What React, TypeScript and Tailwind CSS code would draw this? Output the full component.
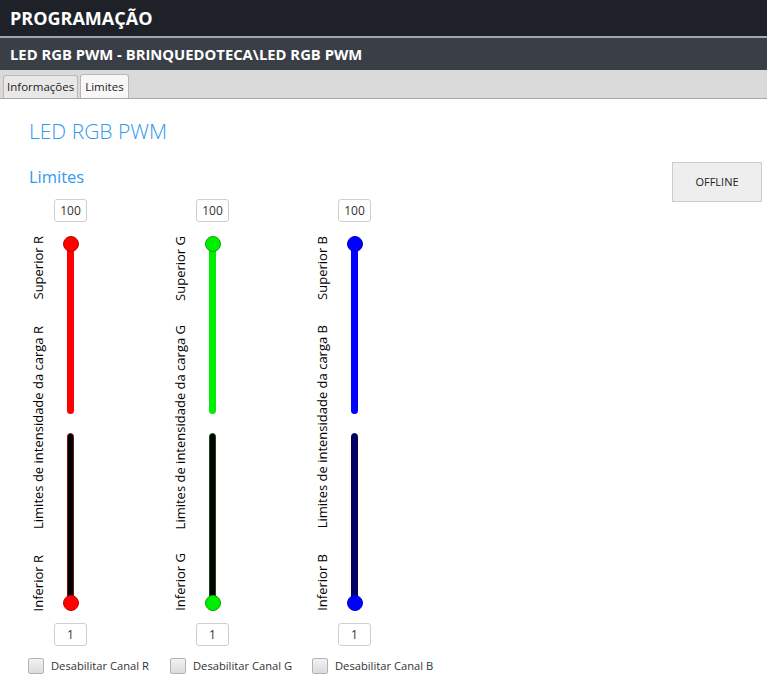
import React from "react";

type Ch = {
  key: string;
  thumb: string;
  thumbBorder: string;
  track: string;
  dark: string;
  darkBorder: string;
};

const channels: Ch[] = [
  { key: "R", thumb: "bg-[#ff0000]", thumbBorder: "border-[#c40000]", track: "bg-[#ff0000]", dark: "bg-[#000000]", darkBorder: "border-[#7a1010]" },
  { key: "G", thumb: "bg-[#00ee00]", thumbBorder: "border-[#00a800]", track: "bg-[#00ee00]", dark: "bg-[#000000]", darkBorder: "border-[#0f4a0f]" },
  { key: "B", thumb: "bg-[#0000ff]", thumbBorder: "border-[#0000c8]", track: "bg-[#0000ff]", dark: "bg-[#000066]", darkBorder: "border-[#000055]" },
];

function VLabel({ children }: { children: React.ReactNode }) {
  return (
    <span className="[writing-mode:vertical-rl] rotate-180 text-[13px] leading-[20px] text-black whitespace-nowrap">
      {children}
    </span>
  );
}

function ValueBox({ value }: { value: string }) {
  return (
    <div className="ml-[26px] w-[33px] h-[23px] border border-[#cfcfcf] rounded-[3px] bg-white flex items-center justify-center text-[12px] text-[#333]">
      {value}
    </div>
  );
}

function Channel({ c }: { c: Ch }) {
  return (
    <div className="w-[142px] flex flex-col">
      <ValueBox value="100" />
      <div className="mt-[14px] flex flex-row h-[375px]">
        <div className="w-[20px] flex flex-col justify-between items-center">
          <VLabel>Superior {c.key}</VLabel>
          <VLabel>Limites de intensidade da carga {c.key}</VLabel>
          <VLabel>Inferior {c.key}</VLabel>
        </div>
        <div className="ml-[14px] w-[17px] flex flex-col items-center">
          <div className={`relative z-10 w-[16px] h-[16px] rounded-full border ${c.thumb} ${c.thumbBorder} -mb-[8px] shrink-0`} />
          <div className={`w-[7px] h-[170px] rounded-full ${c.track} shrink-0`} />
          <div className={`mt-[19px] w-[7px] h-[170px] rounded-full border ${c.dark} ${c.darkBorder} shrink-0`} />
          <div className={`relative z-10 w-[16px] h-[16px] rounded-full border ${c.thumb} ${c.thumbBorder} -mt-[8px] shrink-0`} />
        </div>
      </div>
      <div className="mt-[12px]">
        <ValueBox value="1" />
      </div>
      <div className="mt-[12px] flex items-center">
        <div className="w-[16px] h-[16px] rounded-[2px] border border-[#b4b4b4] bg-gradient-to-b from-[#f2f2f2] to-[#dcdcdc]" />
        <span className="ml-[7px] text-[11.2px] text-[#333] whitespace-nowrap">Desabilitar Canal {c.key}</span>
      </div>
    </div>
  );
}

export default function App() {
  return (
    <div className="w-[767px] h-[679px] bg-white overflow-hidden font-['Open_Sans',sans-serif]">
      <div className="h-[36px] bg-[#1e2228] flex items-center px-[10px] text-white font-bold text-[18px]">
        PROGRAMAÇÃO
      </div>
      <div className="h-[2px] bg-[#a3a7ab]" />
      <div className="h-[32px] bg-[#3a3f47] flex items-center px-[10px] text-white font-bold text-[14.8px]">
        LED RGB PWM - BRINQUEDOTECA\LED RGB PWM
      </div>
      <div className="h-[29px] bg-[#dadada] border-b border-[#a8a8a8] flex items-end pl-[3px] gap-[2px]">
        <div className="h-[23px] px-[3px] bg-[#e8e8e8] border border-b-0 border-[#b8b8b8] rounded-t-[3px] flex items-center text-[11.5px] text-[#222]">
          Informações
        </div>
        <div className="h-[24px] px-[4px] bg-[#f7f7f7] border border-b-0 border-[#b8b8b8] rounded-t-[3px] flex items-center text-[11.5px] text-[#222]">
          Limites
        </div>
      </div>
      <div className="flex flex-row">
        <div className="pl-[28px] flex flex-col">
          <div className="pt-[18px] pl-[1px] text-[21px] leading-[29px] font-light text-[#3399ee]">LED RGB PWM</div>
          <div className="pt-[20px] pl-[1px] text-[16.5px] leading-[22px] text-[#3399ee]">Limites</div>
          <div className="mt-[11px] flex flex-row">
            {channels.map((c) => (
              <Channel key={c.key} c={c} />
            ))}
          </div>
        </div>
        <div className="ml-auto mr-[5px] mt-[63px]">
          <div className="w-[90px] h-[40px] bg-[#eeeeee] border border-[#cccccc] flex items-center justify-center text-[11px] text-[#222]">
            OFFLINE
          </div>
        </div>
      </div>
    </div>
  );
}
